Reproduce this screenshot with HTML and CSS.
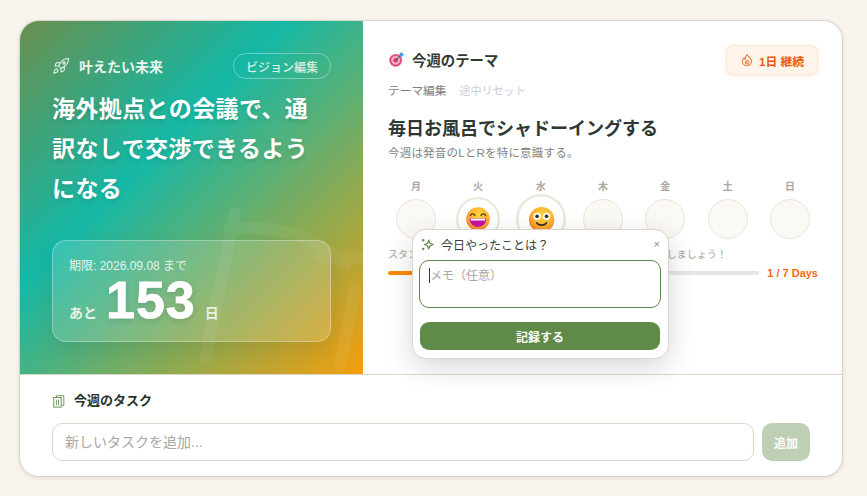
FILE: index.html
```html
<!DOCTYPE html>
<html lang="ja">
<head>
<meta charset="UTF-8">
<meta name="viewport" content="width=device-width, initial-scale=1.0">
<title>今週のテーマ</title>
<link rel="stylesheet" href="styles.css">
</head>
<body>
<div class="board">
  <div class="top">
    <section class="vision">
      <svg class="ghost" viewBox="0 0 343 353" fill="none" stroke="#fff" stroke-width="12" stroke-linecap="round">
        <path d="M215 192 185 338"/>
        <path d="M210 207c40-2 85 4 115 36"/>
        <path d="M300 236h50"/>
        <path d="M335 270 320 345"/>
      </svg>
      <div class="vision-head">
        <div class="vision-label">
          <svg class="rocket" viewBox="0 0 24 24" fill="none" stroke="currentColor" stroke-width="1.4" stroke-linecap="round" stroke-linejoin="round">
            <path d="M4.5 16.5c-1.5 1.26-2 5-2 5s3.74-.5 5-2c.71-.84.7-2.13-.09-2.91a2.18 2.18 0 0 0-2.91-.09z"/>
            <path d="m12 15-3-3a22 22 0 0 1 2-3.95A12.88 12.88 0 0 1 22 2c0 2.72-.78 7.5-6 11a22.35 22.35 0 0 1-4 2z"/>
            <path d="M9 12H4s.55-3.03 2-4c1.62-1.08 5 0 5 0"/>
            <path d="M12 15v5s3.03-.55 4-2c1.08-1.62 0-5 0-5"/>
            <circle cx="16" cy="8" r="1.5"/>
          </svg>
          叶えたい未来
        </div>
        <button class="vision-edit">ビジョン編集</button>
      </div>
      <h1>海外拠点との会議で、通訳なしで交渉できるようになる</h1>
      <div class="deadline">
        <div class="deadline-date">期限: 2026.09.08 まで</div>
        <div class="deadline-count">
          <span class="count-unit">あと</span>
          <span class="count-num">153</span>
          <span class="count-unit">日</span>
        </div>
      </div>
    </section>

    <section class="theme">
      <div class="theme-head">
        <div class="theme-label">
          <svg class="target" viewBox="0 0 20 20">
            <circle cx="9" cy="11" r="7.5" fill="#e0517f"/>
            <circle cx="9" cy="11" r="5" fill="#f3b6cb"/>
            <circle cx="9" cy="11" r="2.8" fill="#d9426f"/>
            <path d="M9 11 15 5" stroke="#555" stroke-width="1.2"/>
            <path d="M13 4l3-3 1 2 2 1-3 3-2.500-.500z" fill="#3f9bf0"/>
          </svg>
          今週のテーマ
        </div>
        <div class="streak">
          <svg class="flame" viewBox="0 0 24 24" fill="none" stroke="currentColor" stroke-width="1.8" stroke-linecap="round" stroke-linejoin="round">
            <path d="M12 2.500c.5 3 6 6 7.500 9.500C21 16 18 22 12 22S3 17 4.500 12c.5-2 1.500-3 2.500-4 .3 1.500 1 2.500 2 3C9 8 10.500 5 12 2.500z"/>
            <path d="M9 16a3.200 3.200 0 1 0 3.200-3.200c-1.200 0-2 .8-2 1.800s.8 1.500 1.600 1.500"/>
          </svg>
          1日 継続
        </div>
      </div>
      <div class="theme-links">
        <span class="link-edit">テーマ編集</span>
        <span class="link-reset">途中リセット</span>
      </div>
      <h2>毎日お風呂でシャドーイングする</h2>
      <p class="theme-note">今週は発音のLとRを特に意識する。</p>

      <div class="week">
        <div class="day"><span class="day-name">月</span><span class="stamp"></span></div>
        <div class="day">
          <span class="day-name">火</span>
          <span class="stamp stamp-done">
            <svg class="face" viewBox="0 0 32 32">
              <defs>
                <radialGradient id="skin1" cx="55%" cy="35%" r="70%">
                  <stop offset="0" stop-color="#ffd93f"/>
                  <stop offset=".6" stop-color="#ffb02e"/>
                  <stop offset="1" stop-color="#f4702f"/>
                </radialGradient>
              </defs>
              <circle cx="16" cy="16" r="15.500" fill="url(#skin1)"/>
              <path d="M6 11.500c1-3 5-3 6 0M20 11.500c1-3 5-3 6 0" fill="none" stroke="#5b3420" stroke-width="1.800" stroke-linecap="round"/>
              <path d="M5 15.500h22c0 7-5 11-11 11S5 22.500 5 15.500z" fill="#c4139f"/>
              <path d="M6.500 15.500h19v2.500h-19z" fill="#fff"/>
            </svg>
          </span>
        </div>
        <div class="day">
          <span class="day-name">水</span>
          <span class="stamp stamp-today">
            <svg class="face face-small" viewBox="0 0 32 32">
              <defs>
                <radialGradient id="skin2" cx="55%" cy="35%" r="70%">
                  <stop offset="0" stop-color="#ffd93f"/>
                  <stop offset=".6" stop-color="#ffb02e"/>
                  <stop offset="1" stop-color="#f4702f"/>
                </radialGradient>
              </defs>
              <circle cx="16" cy="16" r="15.500" fill="url(#skin2)"/>
              <circle cx="10.500" cy="12" r="4.500" fill="#fff"/>
              <circle cx="22" cy="12" r="4.500" fill="#fff"/>
              <circle cx="10.500" cy="12" r="2.200" fill="#3d2a1e"/>
              <circle cx="22" cy="12" r="2.200" fill="#3d2a1e"/>
              <path d="M10 20c2 3.500 10 3.500 12 0" fill="none" stroke="#3d2a1e" stroke-width="2" stroke-linecap="round"/>
            </svg>
          </span>
        </div>
        <div class="day"><span class="day-name">木</span><span class="stamp"></span></div>
        <div class="day"><span class="day-name">金</span><span class="stamp"></span></div>
        <div class="day"><span class="day-name">土</span><span class="stamp"></span></div>
        <div class="day"><span class="day-name">日</span><span class="stamp"></span></div>
      </div>

      <p class="week-hint">スタンプを押して、今週のテーマを毎日少しずつ続けて習慣にしましょう！</p>
      <div class="progress">
        <div class="progress-track"><div class="progress-fill" style="width: 14.3%"></div></div>
        <span class="progress-text">1 / 7 Days</span>
      </div>

      <div class="popover">
        <div class="popover-head">
          <svg class="sparkle" viewBox="0 0 24 24" fill="none" stroke="#5f8a48" stroke-width="2" stroke-linejoin="round">
            <path d="M14 5l2 5 5 2-5 2-2 5-2-5-5-2 5-2z"/>
            <path d="M5 3v4M3 5h4M5 17v4M3 19h4"/>
          </svg>
          <span class="popover-title">今日やったことは？</span>
          <span class="popover-close">×</span>
        </div>
        <div class="memo"><span class="caret"></span>メモ（任意）</div>
        <button class="save">記録する</button>
      </div>
    </section>
  </div>

  <section class="tasks">
    <div class="tasks-title">
      <svg class="notes" viewBox="0 0 16 16" fill="none" stroke="#5f8a48" stroke-width="1">
        <rect x="2" y="4" width="8.500" height="11"/>
        <path d="M5 4V2h6.500l2 0V13h-3M5 6.500v6.500M7.500 6.500v6.500"/>
      </svg>
      今週のタスク
    </div>
    <div class="task-form">
      <input class="task-input" type="text" placeholder="新しいタスクを追加...">
      <button class="task-add">追加</button>
    </div>
  </section>
</div>
</body>
</html>
```

FILE: styles.css
```css
* {
  box-sizing: border-box;
}

body {
  margin: 0;
  padding: 20px 24px 19px 19px;
  height: 496px;
  overflow: hidden;
  background: #f9f5ee;
  font-family: "Liberation Sans", "Noto Sans CJK JP", sans-serif;
  color: #2f3a33;
}

button {
  font-family: inherit;
}

.board {
  height: 457px;
  background: #fff;
  border: 1px solid #dcd6c8;
  border-radius: 20px;
  box-shadow: 0 1px 4px rgba(0,0,0,0.12);
  overflow: hidden;
}

.top {
  display: flex;
  height: 354px;
  border-bottom: 1px solid #dcd6c8;
}

/* left panel */
.vision {
  position: relative;
  width: 343px;
  flex-shrink: 0;
  padding: 32px 32px 0;
  color: #fff;
  background: linear-gradient(135deg, #6a8f4e 0%, #14b8a6 38%, #f59e0b 100%);
  overflow: hidden;
}

.ghost {
  position: absolute;
  left: 0;
  top: 0;
  width: 343px;
  height: 353px;
  opacity: 0.05;
}

.vision-head {
  position: relative;
  display: flex;
  justify-content: space-between;
  align-items: center;
  height: 26px;
}

.vision-label {
  display: flex;
  align-items: center;
  gap: 9px;
  font-size: 14px;
  font-weight: 700;
  color: #e8f6ee;
}

.rocket {
  width: 18px;
  height: 18px;
}

.vision-edit {
  width: 98px;
  height: 26px;
  padding: 0;
  border: 1px solid rgba(255,255,255,0.35);
  border-radius: 13px;
  background: transparent;
  color: #d8efe2;
  font-size: 12px;
  font-weight: 500;
}

h1 {
  position: relative;
  margin: 10px 0 0;
  font-size: 23px;
  line-height: 40px;
  letter-spacing: 0.4px;
  font-weight: 700;
  text-shadow: 0 2px 4px rgba(0,0,0,0.12);
}

.deadline {
  position: relative;
  height: 102px;
  margin-top: 31px;
  padding: 17px 16px 0;
  background: rgba(255,255,255,0.15);
  border: 1px solid rgba(255,255,255,0.3);
  border-radius: 14px;
  box-shadow: 0 8px 20px rgba(0,0,0,0.08);
}

.deadline-date {
  font-size: 12px;
  line-height: 17px;
  color: #e6f4ea;
}

.deadline-count {
  display: flex;
  align-items: baseline;
  gap: 9px;
  margin-top: 3px;
}

.count-unit {
  font-size: 14px;
  font-weight: 700;
  color: #e8f2e4;
}

.count-num {
  font-size: 52px;
  line-height: 44px;
  letter-spacing: 1px;
  font-weight: 700;
  color: #fff;
  -webkit-text-stroke: 0.8px #fff;
  text-shadow: 0 2px 6px rgba(0,0,0,0.15);
}

/* right panel */
.theme {
  position: relative;
  flex: 1;
  padding: 24px 24px 0 25px;
}

.theme-head {
  display: flex;
  justify-content: space-between;
  align-items: center;
  height: 30px;
}

.theme-label {
  display: flex;
  align-items: center;
  gap: 7px;
  margin-top: -1px;
  font-size: 14.4px;
  font-weight: 700;
}

.target {
  width: 17px;
  height: 17px;
}

.streak {
  display: flex;
  align-items: center;
  justify-content: center;
  gap: 5px;
  width: 92px;
  height: 30px;
  background: #fff5ea;
  border: 1px solid #fbe8d5;
  border-radius: 8px;
  box-shadow: 0 1px 4px rgba(240,140,60,0.2);
  color: #ea5a12;
  font-size: 11.8px;
  font-weight: 700;
}

.flame {
  width: 14px;
  height: 14px;
  color: #f07a3c;
}

.theme-links {
  display: flex;
  align-items: baseline;
  gap: 13px;
  margin-top: 8px;
  font-size: 11px;
  line-height: 16px;
}

.link-edit {
  font-size: 11.7px;
  color: #7c8279;
}

.link-reset {
  color: #c9cdd6;
}

h2 {
  margin: 17px 0 0;
  font-size: 18px;
  line-height: 26px;
  font-weight: 700;
  color: #2d3833;
}

.theme-note {
  margin: 3px 0 0;
  font-size: 11.5px;
  line-height: 17px;
  letter-spacing: 0.2px;
  color: #7f857e;
}

.week {
  display: flex;
  justify-content: space-between;
  margin-top: 17px;
}

.day {
  display: flex;
  flex-direction: column;
  align-items: center;
  gap: 5px;
  width: 56px;
}

.day-name {
  font-size: 10px;
  line-height: 15px;
  font-weight: 700;
  color: #a9a5a8;
}

.stamp {
  display: flex;
  align-items: center;
  justify-content: center;
  width: 40px;
  height: 40px;
  background: #fbf9f4;
  border: 1px solid #e9e5da;
  border-radius: 50%;
}

.stamp-done {
  transform: scale(1.1);
  background: #fff;
  border: 2px solid #e8eadb;
}

.stamp-today {
  transform: scale(1.25);
  background: #fff;
  border: 2px solid #e8eadb;
}

.face {
  width: 22px;
  height: 22px;
  flex-shrink: 0;
}

.face-small {
  width: 21px;
  height: 21px;
}

.week-hint {
  margin: 8px 0 0;
  font-size: 10px;
  line-height: 15px;
  color: #a5a59d;
  white-space: nowrap;
}

.progress {
  display: flex;
  align-items: center;
  gap: 8px;
  margin-top: 4px;
}

.progress-track {
  flex: 1;
  height: 4px;
  background: #e5e6ea;
  border-radius: 2px;
}

.progress-fill {
  height: 100%;
  background: #ff8a00;
  border-radius: 2px;
}

.progress-text {
  font-size: 11px;
  line-height: 14px;
  font-weight: 700;
  color: #f96a0a;
}

/* memo popover */
.popover {
  position: absolute;
  left: 49px;
  top: 208px;
  width: 257px;
  height: 130px;
  padding: 0 7px 0 6px;
  background: #fff;
  border: 1px solid #dcd6c8;
  border-radius: 14px;
  box-shadow: 0 8px 28px rgba(0,0,0,0.16);
  z-index: 5;
}

.popover-head {
  display: flex;
  align-items: center;
  gap: 6px;
  height: 28px;
  margin-bottom: 2px;
  padding-left: 1px;
}

.sparkle {
  width: 15px;
  height: 15px;
}

.popover-title {
  flex: 1;
  font-size: 12px;
  color: #37403a;
}

.popover-close {
  font-size: 11px;
  color: #8a9099;
  margin-right: 1px;
}

.memo {
  display: flex;
  align-items: flex-start;
  height: 48px;
  padding: 7px 9px;
  border: 1px solid #5f8a48;
  border-radius: 10px;
  font-size: 12px;
  line-height: 16px;
  color: #a8a8a4;
}

.caret {
  width: 1px;
  height: 15px;
  background: #2f3a33;
}

.save {
  display: block;
  width: 240px;
  height: 28px;
  margin: 14px 0 0 1px;
  border: 0;
  border-radius: 9px;
  background: #5f8a48;
  color: #fff;
  font-size: 12px;
  font-weight: 700;
}

/* tasks */
.tasks {
  padding: 16px 32px 0;
}

.tasks-title {
  display: flex;
  align-items: center;
  gap: 8px;
  font-size: 13px;
  line-height: 20px;
  font-weight: 700;
  color: #2b332e;
}

.notes {
  width: 14px;
  height: 14px;
}

.task-form {
  display: flex;
  gap: 8px;
  margin-top: 12px;
}

.task-input {
  flex: 1;
  height: 38px;
  padding: 0 12px;
  border: 1px solid #dcd6c8;
  border-radius: 10px;
  font-family: inherit;
  font-size: 14px;
  color: #2f3a33;
}

.task-input::placeholder {
  color: #a8a8a4;
}

.task-add {
  width: 48px;
  height: 38px;
  border: 0;
  border-radius: 10px;
  background: #bfcfb5;
  color: #fff;
  font-size: 12px;
  font-weight: 700;
}
```
